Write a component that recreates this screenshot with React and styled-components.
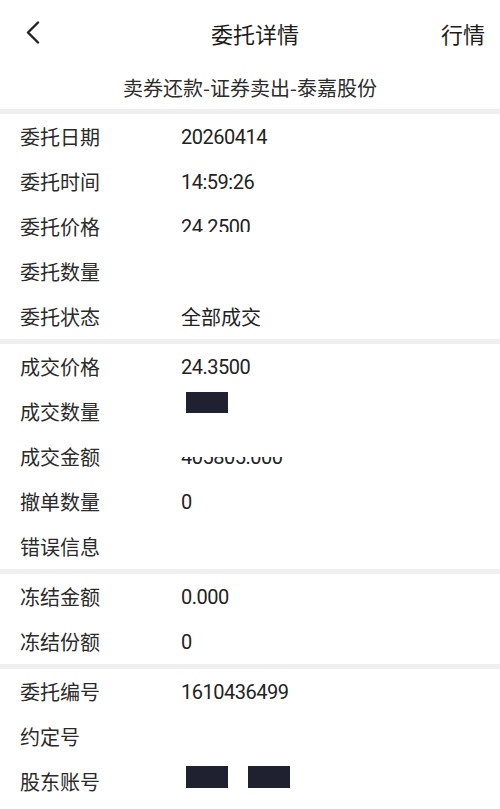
import React from "react";
import styled, { createGlobalStyle, css } from "styled-components";

const Global = createGlobalStyle`
  html, body { margin: 0; padding: 0; background: #ffffff; }
  body { font-family: "Noto Sans CJK SC", "Noto Sans", sans-serif; color: #222; }
  * { box-sizing: border-box; }
`;

const Page = styled.div`
  width: 500px;
  min-height: 809px;
  background: #fff;
  display: flex;
  flex-direction: column;
`;

const NavBar = styled.header`
  height: 66px;
  display: grid;
  grid-template-columns: 90px 1fr 80px;
  align-items: center;
`;

const BackButton = styled.button`
  border: 0;
  background: none;
  padding: 0 0 0 26px;
  height: 100%;
  display: flex;
  align-items: center;
  cursor: pointer;
`;

const Title = styled.h1`
  margin: 0;
  text-align: center;
  font-size: 22px;
  font-weight: 400;
  color: #1c1c1c;
  line-height: 1;
`;

const NavAction = styled.span`
  justify-self: end;
  padding-right: 15px;
  font-size: 22px;
  color: #1c1c1c;
  line-height: 1;
`;

const SubTitle = styled.div`
  height: 43px;
  display: flex;
  align-items: center;
  justify-content: center;
  font-size: 20px;
  color: #2c2c2c;
`;

const Divider = styled.div`
  height: 5px;
  background: #efefef;
`;

const Section = styled.section`
  display: flex;
  flex-direction: column;
`;

const Row = styled.div`
  height: 45px;
  display: grid;
  grid-template-columns: 161px 1fr;
  align-items: center;
  padding-left: 20px;
`;

const Label = styled.span`
  font-size: 20px;
  color: #2a2a2a;
  line-height: 1;
`;

const clipMap = {
  bottom: css`clip-path: inset(0 0 22% 0);`,
  top: css`clip-path: inset(52% 0 0 0);`,
};

const Value = styled.span`
  font-size: 20px;
  font-family: ${(p) =>
    p.$cjk ? `"Noto Sans CJK SC", sans-serif` : `Roboto, "Noto Sans", sans-serif`};
  letter-spacing: ${(p) => (p.$cjk ? "0" : "-0.5px")};
  font-weight: 400;
  color: #222;
  line-height: 1;
  display: flex;
  align-items: center;
  gap: 20px;
  ${(p) => p.$clip && clipMap[p.$clip]}
`;

const Redact = styled.span`
  display: inline-block;
  width: 42px;
  height: ${(p) => p.$h || 21}px;
  background: #1f2030;
  margin-left: 5px;
  margin-bottom: ${(p) => p.$lift * 2}px;
  & + & { margin-left: 0; }
`;

const BackIcon = () => (
  <svg width="14" height="24" viewBox="0 0 14 24">
    <polyline
      points="12,1.5 2,11.5 12,21.5"
      fill="none"
      stroke="#222"
      strokeWidth="2.4"
      strokeLinecap="round"
      strokeLinejoin="round"
    />
  </svg>
);

const sections = [
  [
    { label: "委托日期", value: "20260414" },
    { label: "委托时间", value: "14:59:26" },
    { label: "委托价格", value: "24.2500", clip: "bottom" },
    { label: "委托数量", value: "" },
    { label: "委托状态", value: "全部成交", cjk: true },
  ],
  [
    { label: "成交价格", value: "24.3500" },
    { label: "成交数量", redact: [{ lift: 9, h: 21 }] },
    { label: "成交金额", value: "405805.000", clip: "top" },
    { label: "撤单数量", value: "0" },
    { label: "错误信息", value: "" },
  ],
  [
    { label: "冻结金额", value: "0.000" },
    { label: "冻结份额", value: "0" },
  ],
  [
    { label: "委托编号", value: "1610436499" },
    { label: "约定号", value: "" },
    { label: "股东账号", redact: [{ lift: 5, h: 22 }, { lift: 5, h: 22 }] },
  ],
];

export default function App() {
  return (
    <Page>
      <Global />
      <NavBar>
        <BackButton aria-label="返回">
          <BackIcon />
        </BackButton>
        <Title>委托详情</Title>
        <NavAction>行情</NavAction>
      </NavBar>
      <SubTitle>卖券还款-证券卖出-泰嘉股份</SubTitle>
      {sections.map((rows, i) => (
        <React.Fragment key={i}>
          <Divider />
          <Section>
            {rows.map((r) => (
              <Row key={r.label}>
                <Label>{r.label}</Label>
                <Value $cjk={r.cjk} $clip={r.clip}>
                  {r.redact
                    ? r.redact.map((b, j) => <Redact key={j} $lift={b.lift} $h={b.h} />)
                    : r.value}
                </Value>
              </Row>
            ))}
          </Section>
        </React.Fragment>
      ))}
    </Page>
  );
}
